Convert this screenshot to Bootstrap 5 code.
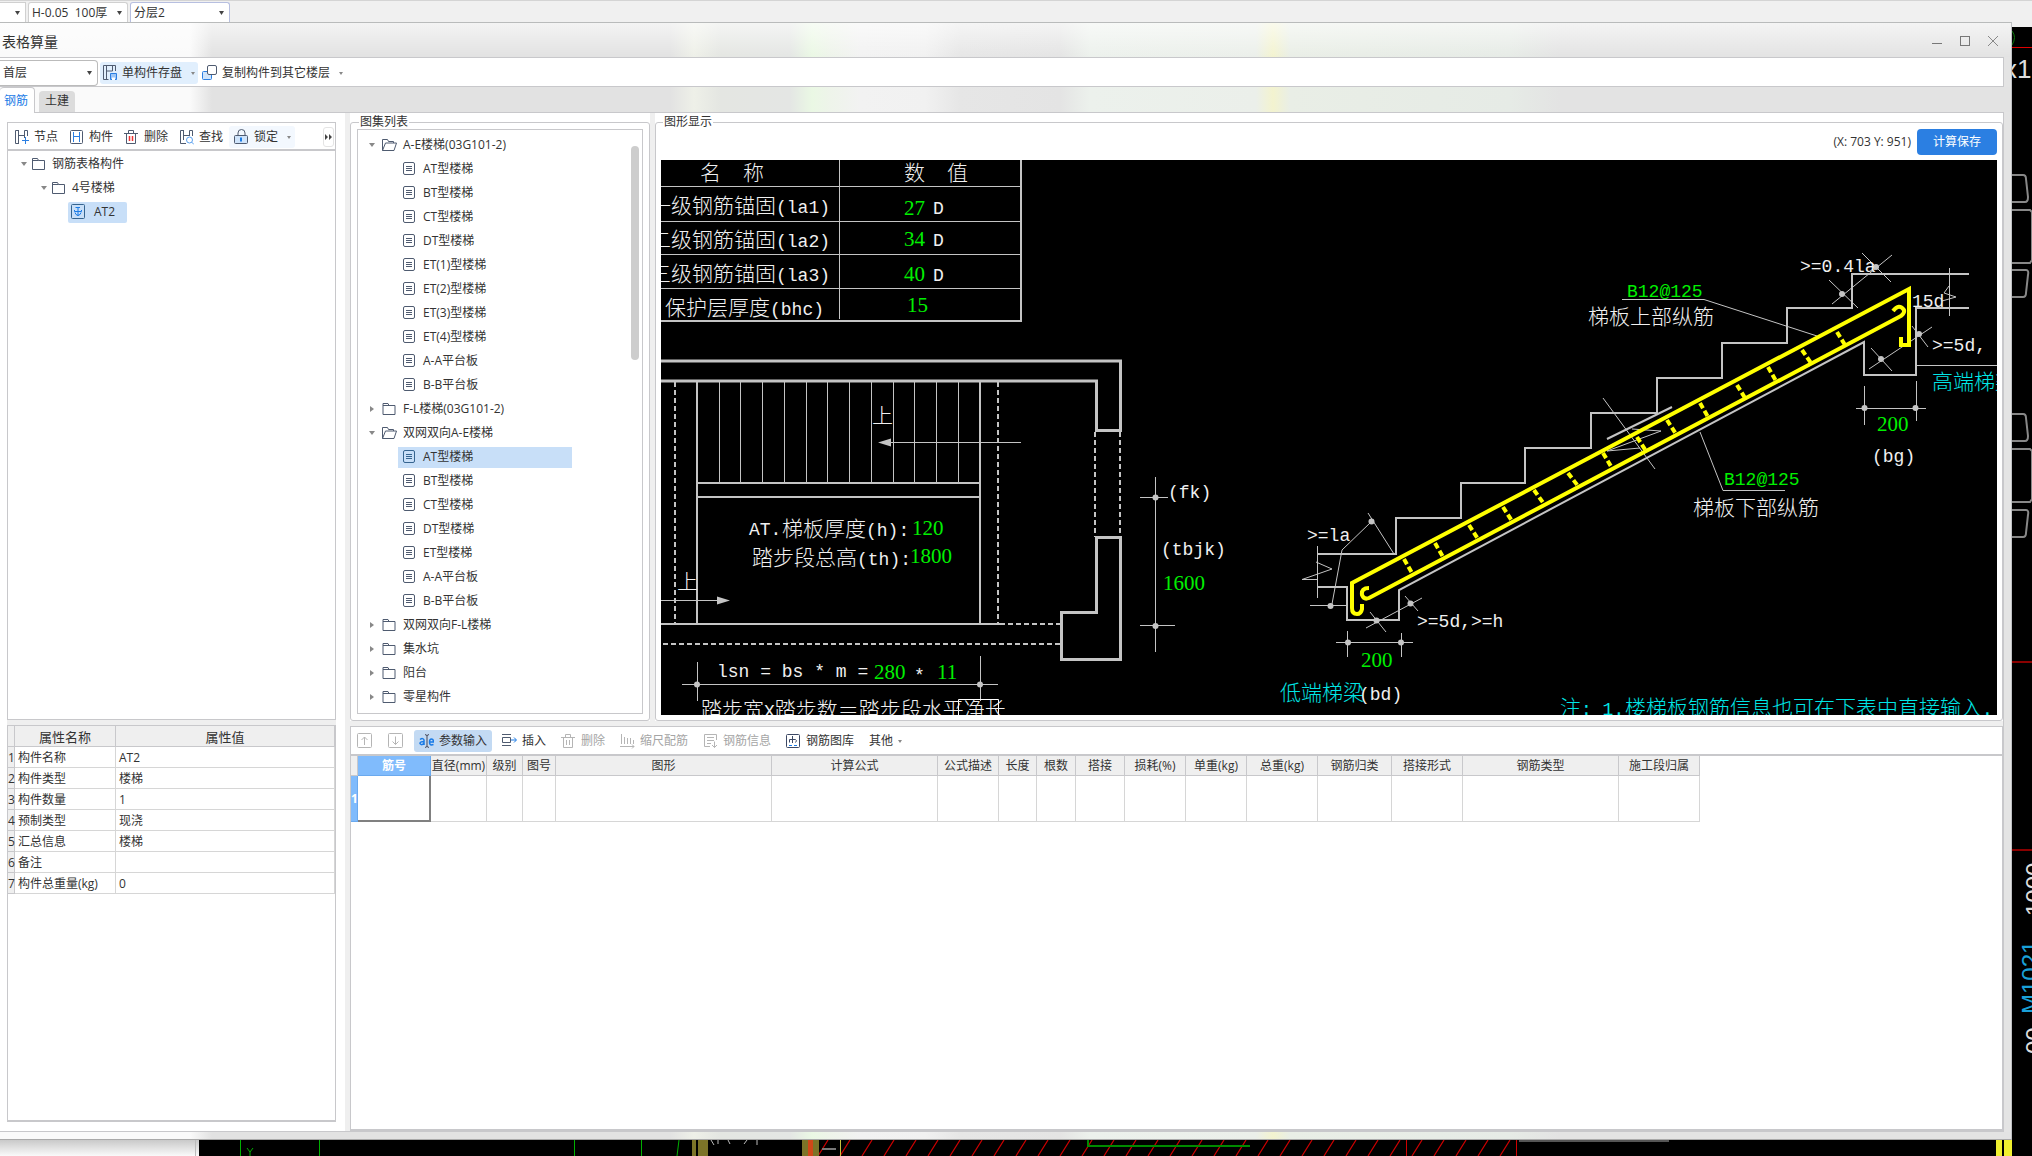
<!DOCTYPE html>
<html lang="zh-CN">
<head>
<meta charset="utf-8">
<meta name="viewport" content="width=device-width, initial-scale=1">
<title>表格算量</title>
<link href="https://cdn.jsdelivr.net/npm/bootstrap@5.3.0/dist/css/bootstrap.min.css" rel="stylesheet">
<style>
:root{--line:#c8c8cb;--soft:#d6d6d6;--gap:#efefef;--ink:#333;--sel:#c8dff8;--icon:#4f5b70}
body{font-family:"Open Sans","Noto Sans CJK SC",sans-serif;font-size:12px;line-height:18px;color:var(--ink);background:#000;height:100vh;overflow:hidden}
svg{display:block;flex:none}
.host-bar{height:22px;background:#f0f0f0;border-top:1px solid #d4d4d4;padding-top:1px;gap:2px}
.combo{appearance:none;border:1px solid var(--line);background:#fff url("data:image/svg+xml,%3Csvg xmlns='http://www.w3.org/2000/svg' width='5' height='4'%3E%3Cpath d='M0 0h5L2.5 4z' fill='%23444'/%3E%3C/svg%3E") no-repeat right 5px center;color:var(--ink);padding:0 12px 0 3px;font-size:12px;line-height:18px;outline:0}
.host-bar .combo{border-color:#d0d0d0;border-bottom:0;border-radius:3px 3px 0 0;width:100px;height:20px}
.host-bar .combo.first{width:26px;border-left:0;border-radius:0}
.host-bar .combo.active{border-color:#b7bfe0}
.win{background:#e4e4e4;border-top:1px solid #b9bbbb;border-right:1px solid #bfc1c4;border-bottom:1px solid #a9a9a9;min-width:0}
.glass{background:linear-gradient(90deg,#fafafa 0,#fafafa 190px,#e2e2e2 212px,#e2e2e2 670px,#eef0e8 694px,#e4e6e2 720px,#e4e6e4 790px,#eaf8e4 812px,#eef4ea 830px,#f2f2f2 860px,#f1f1f1 925px,#e6e6e6 960px,#e4e4e4 1060px,#ecf1ec 1090px,#ebefea 1256px,#f3f3cf 1273px,#e9eee6 1290px,#e6ebe6 1510px,#e3e3e3 1560px,#e3e3e3 100%)}
.title-bar{height:34px;padding:2px 0 0 2px;font-size:14px;position:relative}
.title-bar .glow{position:absolute;inset:0;background:linear-gradient(#fff9,#fff0)}
.title-bar h1{font-size:14px;line-height:20px;margin:1px 0 0;position:relative}
.title-bar .btn{position:relative;margin-right:14px}
.title-bar .btn:last-child{margin-right:11px}
.btn{--bs-btn-padding-x:5px;--bs-btn-padding-y:0;--bs-btn-font-size:12px;--bs-btn-line-height:22px;--bs-btn-border-width:0;--bs-btn-border-radius:3px;--bs-btn-color:var(--ink);--bs-btn-disabled-color:#a5a5a5;--bs-btn-disabled-opacity:1;display:inline-flex;align-items:center;gap:5px;white-space:nowrap;height:22px}
.main-tools{height:30px;background:#fff;border:1px solid var(--line);border-left:0;margin-right:7px;padding-top:2px;gap:2px}
.main-tools .combo{width:98px;height:26px;border-color:#bbb;border-left:0;border-radius:0 4px 4px 0}
.main-tools .btn{padding:0 3px 0 2px}
.hov{background:#e1effd}.hov2{background:#f3f8fe}
.pressed{background:#c3daf3}
.dn{width:0;height:0;border:3px solid transparent;border-top:4px solid #888;border-bottom:0;flex:none}
.btn .dn{border-width:3px 2px 0}
.rt{width:0;height:0;border:3px solid transparent;border-left:4px solid #888;border-right:0;flex:none;margin:0 1px}
.tabs{height:25px;gap:4px}
.tabs a{color:var(--ink);text-decoration:none;line-height:20px;height:21px;background:#dcdcdc;border-radius:4px 4px 0 0;padding:0 6px}
.tabs a.active{background:#fff;color:#1a7be6;height:26px;line-height:25px;padding:0 6px 0 4px;border:1px solid var(--line);border-width:1px 1px 0 0;margin-bottom:-1px;position:relative}
.body-area{border:1px solid var(--line);border-left:0;margin-right:7px;background:var(--gap);min-height:0}
.side-col{width:345px;padding:9px 9px 9px 7px;background:#fff;flex:none}
.pane-box{background:#fff;border:1px solid var(--line)}
.side-top{flex:0 1 598px;min-height:0;overflow:hidden}
.side-bot{border-bottom-width:2px}
.sep5{height:5px;background:var(--gap);flex:none}
.side-tools{height:28px;border-bottom:2px solid var(--line);gap:1px;padding:2px 0 0 1px}
.side-tools .more{margin-left:auto;width:11px;height:20px;border:1px solid #e4e4e4;padding:0;justify-content:center;margin-right:1px}
.tree{list-style:none;margin:0;padding:0}
.side-tree{padding-top:1px}
.tree .node{display:flex;align-items:center;height:24px;white-space:nowrap}
.tree .lv1{padding-left:11px;gap:6px}
.tree .lv2{padding-left:40px}
.tree .leaf{display:flex;align-items:center;gap:8px;height:21px;padding:0 5px}
.tree .leaf.on{width:174px;background:var(--sel)}
.side-tree .node{gap:6px}
.side-tree .leaf{background:var(--sel);border-radius:2px;padding:0 12px 0 3px}
.prop,.bars{border-collapse:separate;border-spacing:0;table-layout:fixed;margin:0}
.prop{width:100%}
.prop th,.prop td{height:21px;padding:1px 3px 0;border:1px solid var(--soft);border-width:0 1px 1px 0;line-height:18px;font-weight:400;white-space:nowrap}
.prop thead th{font-size:13px;text-align:center;background:var(--gap);border-color:var(--line)}
.prop tbody th{padding:1px 0 0;background:var(--gap);border-color:var(--line)}
.upper{flex:0 1 608px;min-height:0;gap:5px}
.groupwrap{background:#fff;padding-top:1px}
.groupwrap fieldset{border:1px solid var(--line);border-radius:3px;padding:0 6px 6px;height:100%;min-width:0;display:flex;flex-direction:column}
.groupwrap legend{float:none;width:auto;font-size:12px;line-height:16px;margin:0 0 -1px 2px;padding:0 1px}
.lib{width:300px;flex:none}
.lib .pane-box{position:relative;padding-top:3px;flex:1;min-height:0;overflow:hidden}
.thumb{position:absolute;right:3px;top:16px;width:8px;height:214px;border-radius:4px;background:#cdcdcd}
.viewer fieldset{padding:0 5px 5px}
.viewer .readout{gap:6px;padding-bottom:5px}
.viewer .btn-primary{--bs-btn-color:#fff;--bs-btn-bg:#2b7fe2;width:80px;height:26px;justify-content:center;border-radius:4px}
.cad{flex:1;min-height:0;background:#000;overflow:hidden}
.cad text{fill:#f0f0f0}
.cjk{font:21px "Noto Sans CJK SC",sans-serif;font-weight:300}
.mono{font:18px "Liberation Mono","Noto Sans CJK SC",monospace}
.num{font:21px "Liberation Serif",serif}
.cad .gr{fill:#00f000}.cad .cy{fill:#00e6e6}
.lower{border-bottom-width:2px}
.grid-tools{height:29px;border-bottom:2px solid var(--line);gap:5px;padding:1px 0 0 1px}
.grid-tools .sq{width:26px}
.bars{width:1349px}
.bars th,.bars td{border:1px solid var(--soft);border-width:0 1px 1px 0;padding:0;text-align:center;font-weight:400;white-space:nowrap;line-height:18px}
.bars thead th{height:20px;background:var(--gap);border-color:var(--line)}
.bars tbody tr{height:46px}
.bars thead th.cur,.bars tbody th{background:#80bbfc;color:#fff;border-color:#6aa9ee;font-weight:700}
.bars td.cur{border:2px solid #808080;border-width:0 2px 2px 0}
.bottom-frame{height:7px;flex:none}
.host-side{width:20px;flex:none;overflow:hidden}
.host-foot{height:16px;overflow:hidden}
</style>
<script src="https://cdn.jsdelivr.net/npm/bootstrap@5.3.0/dist/js/bootstrap.bundle.min.js"></script>
</head>
<body class="d-flex flex-column">

<svg width="0" height="0" class="position-absolute" aria-hidden="true">
 <symbol id="folder" viewBox="0 0 15 14"><path d="M1.500 12.500v-11h5l1 2h6v9zM1.500 3.500h6" fill="none" stroke="#4f5b70"/></symbol>
 <symbol id="folder-open" viewBox="0 0 16 14"><path d="M1.500 12.500v-11h5l1 2h5v1.500M1.500 12.500L4.500 5h11l-2.500 7.500z" fill="none" stroke="#4f5b70"/></symbol>
 <symbol id="doc" viewBox="0 0 12 14"><rect x=".5" y=".5" width="11" height="12" rx="1.500" fill="none" stroke="currentColor"/><path d="M3 4.500h6M3 6.500h6M3 8.500h6" stroke="currentColor"/></symbol>
 <symbol id="trash" viewBox="0 0 15 16"><path d="M0 4.500h14M4.500 4V1.500h5V4M2.500 5v9.500h9V5" fill="none" stroke="currentColor"/></symbol>
</svg>

<div class="host-bar d-flex flex-none">
 <select class="combo first" aria-label="楼层"><option></option></select>
 <select class="combo" aria-label="构件"><option>H-0.05&nbsp; 100厚</option></select>
 <select class="combo active" aria-label="分层"><option>分层2</option></select>
</div>

<div class="d-flex flex-grow-1" style="min-height:0">
<main class="win d-flex flex-column flex-grow-1">
 <header class="title-bar glass d-flex align-items-center">
  <div class="glow"></div>
  <h1 class="fw-normal me-auto">表格算量</h1>
  <button class="btn p-0" aria-label="最小化"><svg width="14" height="14"><path d="M2 9.500h10" stroke="#777"/></svg></button>
  <button class="btn p-0" aria-label="最大化"><svg width="14" height="14"><rect x="2.500" y="2.500" width="9" height="9" fill="none" stroke="#777"/></svg></button>
  <button class="btn p-0" aria-label="关闭"><svg width="14" height="14"><path d="M2 2l10 10M12 2L2 12" stroke="#888"/></svg></button>
 </header>

 <div class="main-tools d-flex align-items-center">
  <select class="combo" aria-label="当前楼层"><option>首层</option></select>
  <button class="btn hov" type="button"><svg width="15" height="16"><path d="M13.500 6V.500H1.500v14h5M4.500 1v13M4.500 6h6M10.500 1v5" fill="none" stroke="#4f5b70"/><path d="M8.500 8.500h6v6h-6z" fill="#9cc6f7" stroke="#2b7fe2"/><path d="M10 12.500h3V15h-3z" fill="#fff"/></svg>单构件存盘<span class="dn ms-1"></span></button>
  <button class="btn" type="button"><svg width="15" height="16"><rect x=".5" y="6.500" width="9" height="8" rx="1" fill="#cfe4fb" stroke="#2b7fe2"/><rect x="5.500" y=".5" width="9" height="9" rx="1.500" fill="#fff" stroke="#4f5b70"/></svg>复制构件到其它楼层<span class="dn ms-1"></span></button>
 </div>

 <nav class="tabs glass d-flex align-items-end">
  <a href="#" class="active">钢筋</a><a href="#">土建</a>
 </nav>

 <div class="body-area d-flex flex-grow-1">
  <section class="side-col d-flex flex-column">
   <div class="pane-box side-top">
    <div class="side-tools d-flex align-items-center">
     <button class="btn" type="button"><svg width="15" height="16"><path d="M5 1.500H1.500v13H5M4.500 1v13M4.500 6.500h6M10.500 9V1.500h3V7" fill="none" stroke="#4f5b70"/><path d="M11.500 8v7M8 11.500h7" stroke="#2b7fe2"/></svg>节点</button>
     <button class="btn" type="button"><svg width="15" height="16"><rect x="1.500" y="1.500" width="12" height="13" rx="1" fill="none" stroke="#4f5b70"/><path d="M4.500 3v10M10.500 3v10M4.500 7.500h6" stroke="#2b7fe2"/></svg>构件</button>
     <button class="btn" type="button"><svg width="15" height="16" color="#4f5b70"><use href="#trash"/><path d="M5.500 7v5M8.500 7v5" stroke="#e33" stroke-width="1.500"/></svg>删除</button>
     <button class="btn" type="button"><svg width="15" height="16"><path d="M7 14.500H1.500v-13H5M4.500 1v10M4.500 6.500h6M10.500 7V1.500h3V7" fill="none" stroke="#4f5b70"/><circle cx="10.500" cy="11" r="3" fill="#fff" stroke="#5aa0ef"/><path d="M12.500 13l2.500 2.500" stroke="#5aa0ef"/></svg>查找</button>
     <button class="btn hov2 pe-1" type="button"><svg width="15" height="16"><path d="M4 6.500V4a3.500 3.500 0 0 1 7 0v2.500" fill="none" stroke="#4f5b70"/><rect x=".5" y="6.500" width="13" height="8" rx="1" fill="#cfe4fb" stroke="#4f5b70"/><path d="M7 8.500v4" stroke="#1a7be6" stroke-width="2"/></svg>锁定<span class="dn ms-1"></span></button>
     <button class="btn more" type="button" aria-label="更多"><svg width="7" height="6"><path d="M0 0l3 3-3 3zM4 0l3 3-3 3z" fill="#444"/></svg></button>
    </div>
    <ul class="tree side-tree">
     <li class="node" style="padding-left:13px"><span class="dn"></span><svg width="15" height="14" style="margin-left:-2px"><use href="#folder"/></svg>钢筋表格构件</li>
     <li class="node" style="padding-left:33px"><span class="dn"></span><svg width="15" height="14" style="margin-left:-2px"><use href="#folder"/></svg>4号楼梯</li>
     <li class="node" style="padding-left:60px"><span class="leaf"><svg width="15" height="16"><rect x=".5" y=".5" width="13" height="14" rx="1" fill="none" stroke="#35648f"/><path d="M7 3v9M4.500 3.500H9M3.500 6v1.500h7V6M4 8.500q.5 2.500 3 3 2.500-.5 3-3" fill="none" stroke="#1a7be6"/></svg>AT2</span></li>
    </ul>
   </div>
   <div class="sep5"></div>
   <div class="pane-box side-bot flex-grow-1">
    <table class="prop">
     <colgroup><col style="width:7px"><col style="width:101px"><col></colgroup>
     <thead><tr><th></th><th>属性名称</th><th>属性值</th></tr></thead>
     <tbody>
      <tr><th>1</th><td>构件名称</td><td>AT2</td></tr>
      <tr><th>2</th><td>构件类型</td><td>楼梯</td></tr>
      <tr><th>3</th><td>构件数量</td><td>1</td></tr>
      <tr><th>4</th><td>预制类型</td><td>现浇</td></tr>
      <tr><th>5</th><td>汇总信息</td><td>楼梯</td></tr>
      <tr><th>6</th><td>备注</td><td></td></tr>
      <tr><th>7</th><td>构件总重量(kg)</td><td>0</td></tr>
     </tbody>
    </table>
   </div>
  </section>

  <div class="d-flex flex-column flex-grow-1" style="margin-left:5px;min-width:0">
   <div class="upper d-flex">
    <div class="groupwrap lib"><fieldset><legend>图集列表</legend>
     <div class="pane-box">
      <ul class="tree">
       <li class="node lv1"><span class="dn"></span><svg width="16" height="14"><use href="#folder-open"/></svg>A-E楼梯(03G101-2)</li>
       <li class="node lv2"><span class="leaf"><svg width="12" height="14" color="#4f5b70"><use href="#doc"/></svg>AT型楼梯</span></li>
       <li class="node lv2"><span class="leaf"><svg width="12" height="14" color="#4f5b70"><use href="#doc"/></svg>BT型楼梯</span></li>
       <li class="node lv2"><span class="leaf"><svg width="12" height="14" color="#4f5b70"><use href="#doc"/></svg>CT型楼梯</span></li>
       <li class="node lv2"><span class="leaf"><svg width="12" height="14" color="#4f5b70"><use href="#doc"/></svg>DT型楼梯</span></li>
       <li class="node lv2"><span class="leaf"><svg width="12" height="14" color="#4f5b70"><use href="#doc"/></svg>ET(1)型楼梯</span></li>
       <li class="node lv2"><span class="leaf"><svg width="12" height="14" color="#4f5b70"><use href="#doc"/></svg>ET(2)型楼梯</span></li>
       <li class="node lv2"><span class="leaf"><svg width="12" height="14" color="#4f5b70"><use href="#doc"/></svg>ET(3)型楼梯</span></li>
       <li class="node lv2"><span class="leaf"><svg width="12" height="14" color="#4f5b70"><use href="#doc"/></svg>ET(4)型楼梯</span></li>
       <li class="node lv2"><span class="leaf"><svg width="12" height="14" color="#4f5b70"><use href="#doc"/></svg>A-A平台板</span></li>
       <li class="node lv2"><span class="leaf"><svg width="12" height="14" color="#4f5b70"><use href="#doc"/></svg>B-B平台板</span></li>
       <li class="node lv1"><span class="rt"></span><svg width="16" height="14"><use href="#folder"/></svg>F-L楼梯(03G101-2)</li>
       <li class="node lv1"><span class="dn"></span><svg width="16" height="14"><use href="#folder-open"/></svg>双网双向A-E楼梯</li>
       <li class="node lv2"><span class="leaf on"><svg width="12" height="14" color="#35648f"><use href="#doc"/></svg>AT型楼梯</span></li>
       <li class="node lv2"><span class="leaf"><svg width="12" height="14" color="#4f5b70"><use href="#doc"/></svg>BT型楼梯</span></li>
       <li class="node lv2"><span class="leaf"><svg width="12" height="14" color="#4f5b70"><use href="#doc"/></svg>CT型楼梯</span></li>
       <li class="node lv2"><span class="leaf"><svg width="12" height="14" color="#4f5b70"><use href="#doc"/></svg>DT型楼梯</span></li>
       <li class="node lv2"><span class="leaf"><svg width="12" height="14" color="#4f5b70"><use href="#doc"/></svg>ET型楼梯</span></li>
       <li class="node lv2"><span class="leaf"><svg width="12" height="14" color="#4f5b70"><use href="#doc"/></svg>A-A平台板</span></li>
       <li class="node lv2"><span class="leaf"><svg width="12" height="14" color="#4f5b70"><use href="#doc"/></svg>B-B平台板</span></li>
       <li class="node lv1"><span class="rt"></span><svg width="16" height="14"><use href="#folder"/></svg>双网双向F-L楼梯</li>
       <li class="node lv1"><span class="rt"></span><svg width="16" height="14"><use href="#folder"/></svg>集水坑</li>
       <li class="node lv1"><span class="rt"></span><svg width="16" height="14"><use href="#folder"/></svg>阳台</li>
       <li class="node lv1"><span class="rt"></span><svg width="16" height="14"><use href="#folder"/></svg>零星构件</li>
      </ul>
      <div class="thumb"></div>
     </div>
    </fieldset></div>

    <div class="groupwrap viewer flex-grow-1" style="min-width:0"><fieldset><legend>图形显示</legend>
     <div class="readout d-flex justify-content-end">
      <span class="align-self-center">(X: 703 Y: 951)</span>
      <button class="btn btn-primary" type="button">计算保存</button>
     </div>
     <div class="cad">
      <svg width="100%" height="100%" role="img" aria-label="AT型楼梯配筋图">
       <g transform="translate(-661,-160)">
        <!-- anchorage table -->
        <g stroke="#c4c4c4" fill="none">
         <path d="M839.500 160V319M661 186.500h360M661 221.500h360M661 254.500h360M661 288.500h360"/>
         <path d="M1021 160V321H661" stroke-width="2"/>
        </g>
        <g class="cjk">
         <text x="700" y="180">名</text><text x="743" y="180">称</text><text x="904" y="180">数</text><text x="947" y="180">值</text>
         <text x="650" y="213">一级钢筋锚固<tspan class="mono">(la1)</tspan></text>
         <text x="650" y="247">二级钢筋锚固<tspan class="mono">(la2)</tspan></text>
         <text x="650" y="281">三级钢筋锚固<tspan class="mono">(la3)</tspan></text>
         <text x="665" y="315">保护层厚度<tspan class="mono">(bhc)</tspan></text>
        </g>
        <g class="num">
         <text class="gr" x="904" y="215">27</text><text class="gr" x="904" y="246">34</text><text class="gr" x="904" y="281">40</text><text class="gr" x="907" y="312">15</text>
        </g>
        <g class="mono"><text x="933" y="214">D</text><text x="933" y="246">D</text><text x="933" y="281">D</text></g>

        <!-- plan -->
        <g stroke="#c4c4c4" fill="none">
         <path stroke-width="3" d="M661 361H1120.500V430.500H1096.500V381H661M1096.500 612.500V537.500H1120.500V659.500H1061.500V612.500H1098"/>
         <path stroke-width="2" d="M697 382V624M980 382V624M697 483H980M697 497H980M661 624H1000"/>
         <path stroke-width="2" stroke-dasharray="5 3" d="M675 382V624M998 382V624M1095 432V537M1120 432V537M1000 624H1061M663 644H1061"/>
         <path d="M719.500 382V482M740.500 382V482M762.500 382V482M784.500 382V482M806.500 382V482M827.500 382V482M849.500 382V482M871.500 382V482M893.500 382V482M914.500 382V482M936.500 382V482M958.500 382V482"/>
         <path d="M880 442.500H1021M661 600.500H728M1155.500 477V652M1140 497.500H1168M1140 625.500H1175M682 684.500H998M697.500 662V701M980.500 656V701"/>
         <path stroke="#fff" d="M958.500 716V699.500H998.500V716"/>
        </g>
        <path fill="#c4c4c4" d="M878 442.500l13-4v8zM730 600.500l-13-4v8z"/>
        <g fill="#c4c4c4"><circle cx="1155.500" cy="497.500" r="3"/><circle cx="1155.500" cy="626" r="3"/><circle cx="697" cy="684.500" r="3"/><circle cx="980" cy="684.500" r="3"/></g>
        <g class="cjk">
         <text x="872" y="423">上</text><text x="677" y="589">上</text>
         <text x="782" y="536">梯板厚度<tspan class="mono">(h):</tspan></text>
         <text x="752" y="565">踏步段总高<tspan class="mono">(th):</tspan></text>
         <text x="701" y="717">踏步宽<tspan class="mono">X</tspan>踏步数＝踏步段水平净长</text>
        </g>
        <g class="mono"><text x="749" y="535">AT.</text><text x="1168" y="498">(fk)</text><text x="1161" y="555">(tbjk)</text><text x="717" y="677">lsn = bs * m =</text><text x="914" y="681">*</text></g>
        <g class="num"><text class="gr" x="912" y="535">120</text><text class="gr" x="910" y="563">1800</text><text class="gr" x="1163" y="590">1600</text><text class="gr" x="874" y="679">280</text><text class="gr" x="937" y="679">11</text></g>

        <!-- section -->
        <g stroke="#c4c4c4" fill="none">
         <path stroke-width="2" d="M1317 554H1396V518H1461V483H1525V448H1591V413H1657V378H1722V343H1787V308H1852V274H1969M1969 308H1916V375H1864V342L1399 590V620H1347V587H1317M1607 439L1672 407"/>
         <path d="M1317.500 546V598M1316 562L1332 569L1302 579.500H1317M1603 398L1655 469M1632 429L1661 431L1607 451L1640 448M1368 513L1394 554M1371 522L1342 550L1332 604M1310 605.500H1347M1366 628L1422 598M1405 596L1418 611M1370 612L1386 632M1336 642.500H1413M1347.500 631V657M1401.500 633V657"/>
         <path d="M1622 299.500H1704L1817 336M1862 253L1891 282M1892 255L1832 304M1829 280L1858 308M1949.500 268V316M1949 286L1944 293L1956 297L1942 301M1912 326L1928 347M1932 327L1869 369M1871 348L1892 371M1916 365.500H1998M1856 408.500H1926M1864.500 386V425M1916.500 381V421M1700 432L1723 490.500H1785"/>
        </g>
        <g fill="#c4c4c4"><circle cx="1371.500" cy="521.500" r="3"/><circle cx="1330.500" cy="606" r="3"/><circle cx="1410.500" cy="603.500" r="3"/><circle cx="1376.500" cy="620.500" r="3"/><circle cx="1348" cy="642.500" r="3"/><circle cx="1401" cy="642.500" r="3"/><circle cx="1842" cy="294" r="3"/><circle cx="1876" cy="267" r="3"/><circle cx="1919" cy="334" r="3"/><circle cx="1881" cy="359" r="3"/><circle cx="1864.500" cy="408" r="3"/><circle cx="1915.500" cy="408" r="3"/></g>
        <g stroke="#ff0" fill="none" stroke-width="4">
         <path d="M1362 604V609Q1361 614 1357 614Q1352 614 1352 608V583L1909 289V345H1901V337"/>
         <path d="M1369 588Q1361 588 1362 595Q1364 600 1369 598L1899 317Q1905 314 1904 310Q1899 303 1893 311"/>
         <path stroke-dasharray="6 3" d="M1404 559L1412 573M1435 543L1443 557M1469 525L1478 539M1503 507L1512 521M1534 490L1544 504M1568 473L1578 486M1603 453L1612 468M1637 437L1646 451M1667 420L1676 434M1700 403L1708 417M1737 385L1745 398M1768 367L1776 381M1802 350L1811 363M1837 332L1845 345"/>
        </g>
        <g class="cjk">
         <text x="1588" y="324">梯板上部纵筋</text><text x="1693" y="515">梯板下部纵筋</text>
         <text class="cy" x="1280" y="700">低端梯梁</text><text class="cy" x="1932" y="389">高端梯梁</text>
         <text class="cy" x="1560" y="715">注</text><text class="cy" x="1625" y="715">楼梯板钢筋信息也可在下表中直接输入<tspan class="mono">.</tspan></text>
        </g>
        <g class="mono">
         <text class="cy" x="1581" y="715">: 1.</text>
         <text class="gr" x="1627" y="297">B12@125</text><text class="gr" x="1724" y="485">B12@125</text>
         <text x="1307" y="541">&gt;=la</text><text x="1417" y="627">&gt;=5d,&gt;=h</text><text x="1800" y="272">&gt;=0.4la</text><text x="1912" y="307">15d</text><text x="1932" y="351">&gt;=5d,</text>
         <text x="1359" y="700">(bd)</text><text x="1872" y="462">(bg)</text>
        </g>
        <g class="num"><text class="gr" x="1361" y="667">200</text><text class="gr" x="1877" y="431">200</text></g>
       </g>
      </svg>
     </div>
    </fieldset></div>
   </div>
   <div class="sep5"></div>

   <section class="pane-box lower flex-grow-1">
    <div class="grid-tools d-flex align-items-center">
     <button class="btn sq" type="button" disabled aria-label="上移"><svg width="15" height="16" fill="none" stroke="#b5b5b5"><rect x=".5" y=".5" width="14" height="14" rx="1"/><path d="M7.500 12V4M4.500 7l3-3 3 3"/></svg></button>
     <button class="btn sq" type="button" disabled aria-label="下移"><svg width="15" height="16" fill="none" stroke="#b5b5b5"><rect x=".5" y=".5" width="14" height="14" rx="1"/><path d="M7.500 3.500v8M4.500 8.500l3 3 3-3"/></svg></button>
     <button class="btn pressed" type="button"><svg width="15" height="16"><path d="M1 6.500q3-2 4 .5v5M5 8.500Q1 8.500 1 10.500q2 2.500 4-.5M10.500 9h4q0-3-2-3t-2 3 2 3l2-.5" fill="none" stroke="#1a7be6" stroke-width="1.500"/><path d="M6 1.500l2 1 2-1M8 2.500v11M6 14.500l2-1 2 1" fill="none" stroke="#445"/></svg>参数输入</button>
     <button class="btn" type="button"><svg width="15" height="16"><path d="M0 1.500h9M0 12.500h9M.500 4.500h8v5h-8z" fill="none" stroke="#4f5b70"/><path d="M9 7h5M12 4.500L14.500 7 12 9.500" fill="none" stroke="#1a7be6"/></svg>插入</button>
     <button class="btn" type="button" disabled><svg width="15" height="16" color="#b5b5b5"><use href="#trash"/><path d="M5.500 7v5M8.500 7v5" stroke="#b5b5b5"/></svg>删除</button>
     <button class="btn" type="button" disabled><svg width="15" height="16" fill="none" stroke="#b5b5b5"><path d="M1.500 1v10M4.500 4v7M7.500 5v6M10.500 5v6M13.500 7v4M0 13.500h14M12 11.500l2 2-2 2"/></svg>缩尺配筋</button>
     <button class="btn" type="button" disabled><svg width="15" height="16" fill="none" stroke="#b5b5b5"><path d="M7 13.500H1.500v-12h12V7M4 4.500h7M4 7.500h7M4 10.500h4M11.500 8.500v6M9 12l2.500 2.500L14 12"/></svg>钢筋信息</button>
     <button class="btn" type="button"><svg width="15" height="16"><rect x=".5" y="1.500" width="13" height="13" rx="1" fill="none" stroke="#3c4864"/><path d="M6.500 3v7M3.500 9.500v-3h6q2 1 0 3" fill="none" stroke="#3c4864"/><path d="M3 12.500h3M8 12.500h3" stroke="#1a7be6"/></svg>钢筋图库</button>
     <button class="btn" type="button">其他<span class="dn"></span></button>
    </div>
    <table class="bars">
     <colgroup><col style="width:7px"><col style="width:73px"><col style="width:56px"><col style="width:36px"><col style="width:33px"><col style="width:216px"><col style="width:166px"><col style="width:61px"><col style="width:38px"><col style="width:39px"><col style="width:49px"><col style="width:61px"><col style="width:61px"><col style="width:71px"><col style="width:74px"><col style="width:71px"><col style="width:156px"><col style="width:81px"></colgroup>
     <thead><tr><th></th><th class="cur">筋号</th><th>直径(mm)</th><th>级别</th><th>图号</th><th>图形</th><th>计算公式</th><th>公式描述</th><th>长度</th><th>根数</th><th>搭接</th><th>损耗(%)</th><th>单重(kg)</th><th>总重(kg)</th><th>钢筋归类</th><th>搭接形式</th><th>钢筋类型</th><th>施工段归属</th></tr></thead>
     <tbody><tr><th>1</th><td class="cur"></td><td></td><td></td><td></td><td></td><td></td><td></td><td></td><td></td><td></td><td></td><td></td><td></td><td></td><td></td><td></td><td></td></tr></tbody>
    </table>
   </section>
  </div>
 </div>
 <div class="bottom-frame glass"></div>
</main>

<!-- drawing behind the dialog, right edge -->
<aside class="host-side">
 <svg width="20" height="1118">
  <g transform="translate(-2012,-22)" fill="none" stroke="#888">
   <path d="M2012 22h20v5h-20z" fill="#f0f0f0" stroke="none"/>
   <path d="M2012 31q5 6 0 14" stroke="#0a7a0a"/>
   <path d="M2012 47.500h20" stroke="#e00000"/><path d="M2012 662h20M2012 850h20" stroke="#8a0000" stroke-width="2"/>
   <path stroke-width="2" d="M2012 175h11q3 0 3 4l2 18q0 5-3 5h-13M2012 210h18l2 2v48l-2 3h-18M2012 270h14q3 0 2 5l-2 18q0 4-3 4h-11M2012 414h11q3 0 3 4l2 18q0 5-3 5h-13M2012 449h18l2 2v48l-2 3h-18M2012 510h14q3 0 2 5l-2 18q0 4-3 4h-11"/>
   <g stroke="none" font-family="Liberation Sans, sans-serif" font-size="24" fill="#ddd">
    <text x="2004" y="78" font-size="26">x1</text>
    <text transform="translate(2043,916) rotate(-90)">1000</text>
    <text transform="translate(2043,1054) rotate(-90)">00</text>
    <text transform="translate(2039,1014) rotate(-90)" fill="#1aa0d8">M1021</text>
   </g>
  </g>
 </svg>
</aside>
</div>

<!-- drawing behind the dialog, bottom edge -->
<footer class="host-foot">
 <svg width="100%" height="16">
  <defs>
   <pattern id="hatch" width="22" height="16" patternUnits="userSpaceOnUse"><path d="M4 16L14 0" stroke="#d00000" stroke-width="1.200"/></pattern>
   <linearGradient id="fade" x2="0" y2="1"><stop stop-color="#c9c9c9"/><stop offset="1" stop-color="#fafafa"/></linearGradient>
  </defs>
  <path d="M0 0h199v16H0z" fill="url(#fade)"/><path d="M195.500 0v16" stroke="#bbb"/>
  <path d="M240.500 0v16M319.500 0v16M574.500 0v16M641.500 0v16M679 0l-2 16M247 8l3 4 3-4M250 12v4" stroke="#00b000" fill="none"/>
  <path d="M692 0h4v16h-4zM698 0h10v16h-10zM802 0h17v16h-17z" fill="#7c7428"/>
  <path d="M711 0l3 5M718 0v4M728 0l2 4M744 4l3-4M757 0v5" stroke="#bbb"/>
  <path d="M808 0h5v16h-5z" fill="#d04818"/>
  <rect x="819" y="0" width="698" height="16" fill="url(#hatch)"/>
  <path d="M840.500 0v16" stroke="#c8c040"/><path d="M822 9h14" stroke="#777" stroke-width="2"/>
  <path d="M1406.500 0v16M1516.500 0v16" stroke="#d00000"/>
  <path d="M1088 0v6h162" stroke="#008a00" stroke-width="2" fill="none"/>
  <path d="M1519 1h150" stroke="#555" stroke-width="2"/>
  <path d="M1996 0h6v16h-6zM2004 0h8v16h-8z" fill="#f0f030"/>
 </svg>
</footer>
</body>
</html>
